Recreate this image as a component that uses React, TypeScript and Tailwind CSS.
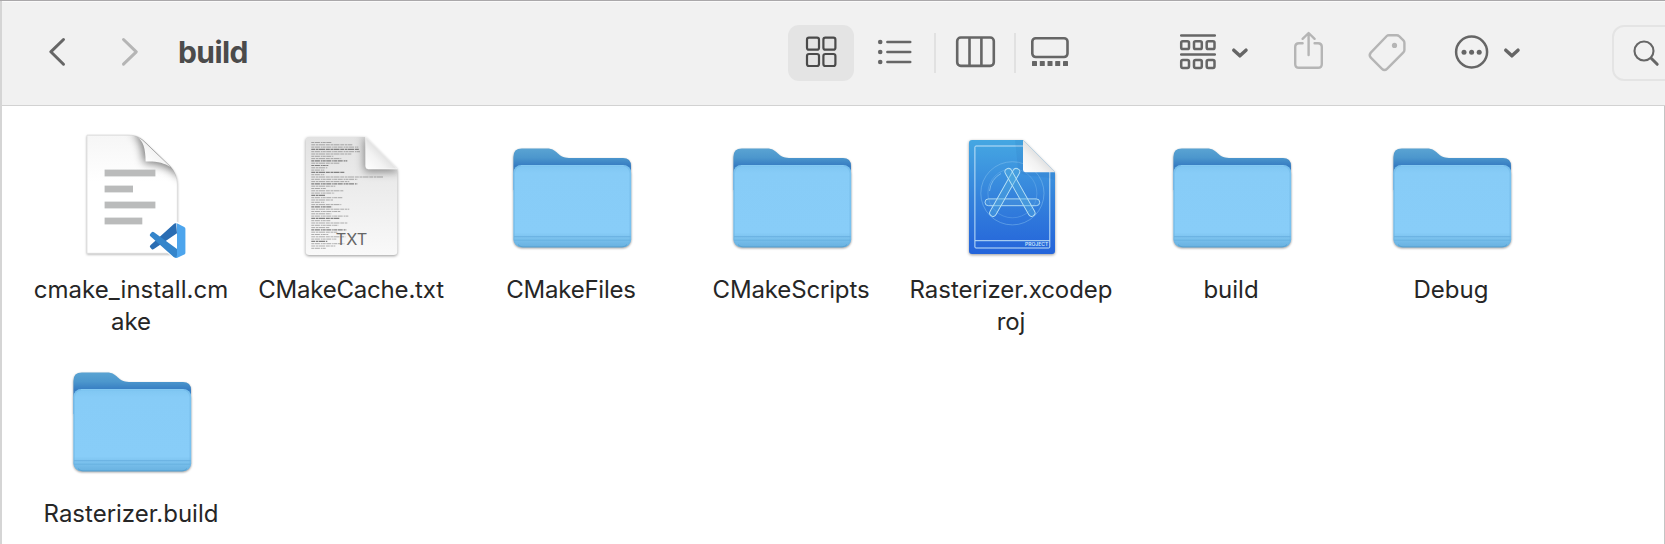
import React from "react";

const dark = "#666666";
const faint = "#b5b5b5";

function Icon({ x, w, className = "", children }: { x: number; w: number; className?: string; children: React.ReactNode }) {
  return (
    <svg width={w} height={56} viewBox={`${x} 25 ${w} 56`} fill="none" strokeLinecap="round" strokeLinejoin="round" className={`block shrink-0 ${className}`}>
      {children}
    </svg>
  );
}

function Toolbar() {
  return (
    <header className="flex h-[104px] shrink-0 items-start overflow-hidden border-b border-[#d2d2d2] bg-[#f1f1f1] pt-[23px] pl-[44px]">
      <Icon x={46} w={24}>
        <path d="M63.5 39.5 50.8 51.8 63.5 64.2" stroke={dark} strokeWidth="3" />
      </Icon>
      <Icon x={118} w={24} className="ml-12">
        <path d="M123.5 39.5 136.3 51.8 123.5 64.2" stroke={faint} strokeWidth="3" />
      </Icon>
      <h1 className="ml-9 w-[610px] shrink-0 text-[30px] leading-[54px] font-bold tracking-[-0.6px] text-[#4b4b4b]">build</h1>
      <div className="flex h-14 w-[66px] shrink-0 items-center justify-center rounded-[11px] bg-[#e4e4e4]">
        <Icon x={802} w={38}>
          <g stroke="#4a4a4a" strokeWidth="2.2">
            <rect x="807" y="37.7" width="12" height="12" rx="2" />
            <rect x="823.4" y="37.7" width="12" height="12" rx="2" />
            <rect x="807" y="54" width="12" height="12" rx="2" />
            <rect x="823.4" y="54" width="12" height="12" rx="2" />
          </g>
        </Icon>
      </div>
      <Icon x={874} w={42} className="ml-5">
        {[42, 52, 62].map((y) => (
          <g key={y}>
            <circle cx="880.2" cy={y} r="2.3" fill={dark} />
            <path d={`M887.4 ${y}H910.2`} stroke={dark} strokeWidth="2.6" />
          </g>
        ))}
      </Icon>
      <div className="mt-2 ml-[18px] h-10 w-[2px] shrink-0 bg-[#e1e1e1]" />
      <Icon x={952} w={48} className="ml-4">
        <g stroke={dark} strokeWidth="2.6">
          <rect x="957.2" y="37.5" width="36.6" height="28.4" rx="3.6" />
          <path d="M969.5 38V66M981.4 38V66" strokeLinecap="butt" />
        </g>
      </Icon>
      <div className="mt-2 ml-[14px] h-10 w-[2px] shrink-0 bg-[#e1e1e1]" />
      <Icon x={1028} w={46} className="ml-3">
        <rect x="1032.3" y="38.2" width="35.2" height="18.8" rx="3.4" stroke={dark} strokeWidth="2.6" />
        {[1032, 1039.8, 1047.5, 1055.2, 1063].map((x) => (
          <rect key={x} x={x} y="61" width="5" height="5" rx=".6" fill={dark} />
        ))}
      </Icon>
      <Icon x={1176} w={76} className="ml-[102px]">
        <g stroke={dark} strokeWidth="2.5">
          <path d="M1181.2 35.5H1214.8M1181.2 54.4H1214.8" />
          {[1181.2, 1194, 1206.7].map((x) => (
            <g key={x}>
              <rect x={x} y="41.2" width="7.8" height="7.8" rx="1.6" />
              <rect x={x} y="60.1" width="7.8" height="7.8" rx="1.6" />
            </g>
          ))}
          <path d="M1233.8 50.2 1239.9 55.8 1246 50.2" strokeWidth="3.5" />
        </g>
      </Icon>
      <Icon x={1290} w={38} className="ml-[38px]">
        <g stroke={faint} strokeWidth="2.4">
          <path d="M1302.6 43.2H1299Q1295.2 43.2 1295.2 47V64Q1295.2 67.8 1299 67.8H1318Q1321.8 67.8 1321.8 64V47Q1321.8 43.2 1318 43.2H1314.6" />
          <path d="M1308.6 55V33.4M1302.6 38.8 1308.6 33 1314.6 38.8" />
        </g>
      </Icon>
      <Icon x={1364} w={46} className="ml-9">
        <path d="M1386.8 36Q1387.6 35.2 1388.8 35.2H1396.8Q1398.2 35.2 1399.1 36.2L1403.4 40.4Q1404.4 41.4 1404.4 42.8V50Q1404.4 51.4 1403.4 52.4L1387 68.8Q1384.5 71.2 1382 68.8L1370.8 57.7Q1368.6 55.2 1370.8 52.6Z" stroke={faint} strokeWidth="2.4" />
        <circle cx="1394.5" cy="45.4" r="2.6" fill={faint} />
      </Icon>
      <Icon x={1450} w={74} className="ml-10">
        <circle cx="1471.6" cy="52" r="15.5" stroke={dark} strokeWidth="2.5" />
        {[1464, 1471.6, 1479.2].map((x) => (
          <circle key={x} cx={x} cy="52.2" r="2.5" fill={dark} />
        ))}
        <path d="M1505.8 50.2 1511.9 55.8 1518 50.2" stroke={dark} strokeWidth="3.5" />
      </Icon>
      <div className="ml-[88px] h-14 w-20 shrink-0 rounded-[12px] border-2 border-[#e4e4e4]">
        <svg width="51" height="52" viewBox="1614 27 51 52" fill="none" stroke={dark} strokeLinecap="round" className="block">
          <circle cx="1644" cy="51" r="9.5" strokeWidth="2.1" />
          <path d="M1651.2 58.3 1657.2 64.3" strokeWidth="3" />
        </svg>
      </div>
    </header>
  );
}

function Art({ children }: { children: React.ReactNode }) {
  return (
    <svg width="220" height="144" viewBox="0 0 220 144" className="block">
      {children}
    </svg>
  );
}

function FolderIcon() {
  return (
    <Art>
      <g className="drop-shadow-[0_1px_1px_rgba(0,0,0,0.4)]">
        <path d="M52.4 27Q52.4 18.6 60.8 18.6H86C97 18.6 96 28 108 28H162Q170 28 170 36V60H52.4Z" fill="url(#folderBack)" />
        <rect x="52.4" y="35" width="117.8" height="82.2" rx="8" fill="url(#folderFront)" />
      </g>
      <rect x="53.2" y="35.6" width="116" height="81" rx="7.4" fill="none" stroke="#6bb5e6" strokeOpacity=".5" strokeWidth="1.4" />
      <path d="M60 35.5H162.6" stroke="#84c9f2" strokeWidth="1" />
      <path d="M53 106.7H169.6M53 110.2H169.6" stroke="#69b1e0" strokeWidth="1" />
      <path d="M57 114.6Q58.5 116.8 62 116.8H161Q164.5 116.8 166 114.6" fill="none" stroke="#559dcc" strokeWidth=".8" />
    </Art>
  );
}

const sourcePage = "M66 5.2H108C116 5.2 120 8 124 12L149.5 36.5Q156.3 44 156.3 54V123.3H66Z";
const textPage = "M68 7H124.5L156.3 39V121.5Q156.3 125 152.8 125H68.2Q64.7 125 64.7 121.5V10.5Q64.7 7 68 7Z";

function SourceIcon() {
  return (
    <Art>
      <path d={sourcePage} className="drop-shadow-[0_1px_1px_rgba(0,0,0,0.28)]" fill="url(#paperFade)" stroke="#dcdcdc" strokeWidth=".8" />
      <g clipPath="url(#sourceClip)">
        <path d="M110 1C120 8 121 20 123 33 138 33 150 38 162 50L164 36 128 4Z" fill="#000" fillOpacity=".5" filter="url(#softShade)" />
      </g>
      <path d="M116.5 7.2C122 11 124.6 18 124.6 31.6 136 31.2 143 33 149.500 37L125 13.500Q121 9.300 116.500 7.200Z" fill="url(#curl)" />
      <g fill="#babbbb">
        <rect x="83.6" y="39.6" width="50.8" height="6.8" />
        <rect x="83.6" y="55.6" width="28.4" height="6.8" />
        <rect x="83.6" y="71.6" width="50.8" height="6.8" />
        <rect x="83.6" y="87.6" width="37.7" height="6.8" />
      </g>
      <path d="M155.2 93.4 164.3 97.6V123.8L155.2 128 138.5 113.8 132.2 119.3 129 117V113.8L132.5 110.7 129 107.5V104.3L132.2 102 138.5 107.2Z" fill="#fff" stroke="#fff" strokeWidth="3.5" strokeLinejoin="round" />
      <path d="M155.2 93.4 156 103.2 132.9 119.1Q131.7 120 130.6 119L129.3 117.6Q128.2 116.3 129.4 115.2L152.6 94.3Q153.8 93.2 155.2 93.4Z" fill="#2a6db3" />
      <path d="M129.4 103.7 130.7 102.3Q131.8 101.4 133 102.3L156 119V128Q153.8 128 152.6 127L129.4 106.3Q128.2 105 129.4 103.7Z" fill="#3485cb" />
      <path d="M155.2 93.4Q155.8 93.3 156.4 93.6L163.2 96.9Q164.4 97.5 164.4 98.8V122.7Q164.4 124 163.2 124.6L156.4 127.8Q155.2 128.3 154 127.9 156 127 156 125V96.5Q156 94 155.2 93.4Z" fill="#4da5ed" />
    </Art>
  );
}

const codeRows = Array.from({ length: 47 }, (_, i) => {
  const widths = [20, 41, 47, 48, 49, 40, 22, 30, 36, 28, 17, 16, 13, 33, 13, 72, 46, 38, 46];
  const width = i < widths.length ? widths[i] : 13 + ((i * 17) % 26);
  return { y: 12.5 + i * 2.3, width, bold: i === 10 || i % 5 === 3 };
});

function TextFileIcon() {
  return (
    <Art>
      <path className="drop-shadow-[0_1.5px_1.5px_rgba(0,0,0,0.4)]" d={textPage} fill="url(#txtPaper)" />
      <g stroke="#555">
        {codeRows.map((row, i) => (
          <path key={i} d={`M70.3 ${row.y}h${row.width}`} strokeWidth={row.bold ? 1.1 : 0.9} strokeOpacity={row.bold ? 0.7 : 0.5} strokeDasharray={i % 2 ? "4 .7 2.5 .5 6 .8" : "3 .6 5 .9 1.5 .4"} />
        ))}
      </g>
      <g clipPath="url(#textClip)">
        <path d="M123 5 160 42H126Q123 42 123 39Z" fill="#000" fillOpacity=".42" filter="url(#softShade)" />
      </g>
      <path d="M124.7 7 156.3 39H127.5Q124.7 39 124.7 36Z" fill="url(#fold)" stroke="#fff" strokeWidth=".6" />
      <text x="94.8" y="115" fontSize="16.5" textLength="31.5" lengthAdjust="spacingAndGlyphs" fontFamily="Inter, sans-serif" fill="#666">TXT</text>
    </Art>
  );
}

function ProjectIcon() {
  return (
    <Art>
      <path className="drop-shadow-[0_1.5px_1.5px_rgba(0,0,0,0.4)]" d="M71 10H122L154 42.3V121Q154 124 151 124H71Q68 124 68 121V13Q68 10 71 10Z" fill="url(#blueprint)" />
      <path d="M122 16H75Q73.9 16 73.9 17.2V117Q73.9 118 75 118H147.8Q148.8 118 148.8 117V42M74 110.7H148.8" fill="none" stroke="#c2e2f8" strokeWidth="1" />
      <g fill="none" stroke="#8cc6f0" strokeOpacity=".5">
        <circle cx="111.4" cy="63.3" r="31.6" strokeWidth=".9" />
        <circle cx="111.4" cy="63.3" r="24.5" strokeWidth=".6" />
      </g>
      <path d="M88.5 61Q90 49 100 43.5" fill="none" stroke="#9fd2f4" strokeOpacity=".6" strokeWidth="1" />
      <g fill="none" stroke="#b9e2f6" strokeWidth=".9">
        <rect x="84" y="68.9" width="54.7" height="6.8" rx="3.4" fill="#59a6df" fillOpacity=".3" />
        <rect x="-3.4" y="-27" width="6.8" height="54" rx="3.4" transform="translate(103.7 62.3) rotate(29.5)" fill="#59b5df" fillOpacity=".35" />
        <rect x="-3.4" y="-27" width="6.8" height="54" rx="3.4" transform="translate(119 62.3) rotate(-29.5)" fill="#59b5df" fillOpacity=".35" />
      </g>
      <path d="M114 10H122V42.3H154V50C140 44 118 49 117 38Z" fill="#174d96" fillOpacity=".08" />
      <path d="M122 10 154 42.3H125Q122 42.3 122 39.3Z" fill="url(#fold)" />
      <text x="124" y="116" fontSize="5" fontWeight="600" textLength="23.3" lengthAdjust="spacingAndGlyphs" fontFamily="Inter, sans-serif" fill="#cce6fa">PROJECT</text>
    </Art>
  );
}

function Gradients() {
  return (
    <svg width="0" height="0" className="absolute">
      <defs>
        <linearGradient id="folderBack" gradientUnits="userSpaceOnUse" x1="0" y1="18" x2="0" y2="42">
          <stop offset="0" stopColor="#5ba4d3" />
          <stop offset=".4" stopColor="#4c97cd" />
          <stop offset=".75" stopColor="#367cc2" />
          <stop offset="1" stopColor="#3b86c6" />
        </linearGradient>
        <linearGradient id="folderFront" x1="0" y1="0" x2="0" y2="1">
          <stop offset="0" stopColor="#7fc6f2" />
          <stop offset=".1" stopColor="#87ccf7" />
          <stop offset=".82" stopColor="#88cdf8" />
          <stop offset=".88" stopColor="#7dc3ef" />
          <stop offset="1" stopColor="#68b1e0" />
        </linearGradient>
        <linearGradient id="paperFade" x1="0" y1="0" x2="0" y2="1">
          <stop offset="0" stopColor="#f6f6f6" />
          <stop offset=".4" stopColor="#ffffff" />
        </linearGradient>
        <linearGradient id="curl" x1="1" y1="0" x2="0" y2="1">
          <stop offset=".4" stopColor="#f0f0f0" />
          <stop offset=".8" stopColor="#fff" />
        </linearGradient>
        <linearGradient id="txtPaper" x1="0" y1="0" x2="0" y2="1">
          <stop offset="0" stopColor="#e2e2e2" />
          <stop offset="1" stopColor="#f9f9f9" />
        </linearGradient>
        <linearGradient id="fold" x1="0" y1="1" x2=".55" y2=".45">
          <stop offset="0" stopColor="#fff" />
          <stop offset=".6" stopColor="#f2f2f2" />
          <stop offset="1" stopColor="#dedede" />
        </linearGradient>
        <linearGradient id="blueprint" x1="0" y1="0" x2="0" y2="1">
          <stop offset="0" stopColor="#45a7e2" />
          <stop offset=".5" stopColor="#3583dc" />
          <stop offset="1" stopColor="#2464da" />
        </linearGradient>
        <filter id="softShade" x="-50%" y="-50%" width="200%" height="200%">
          <feGaussianBlur stdDeviation="4" />
        </filter>
        <clipPath id="sourceClip">
          <path d={sourcePage} />
        </clipPath>
        <clipPath id="textClip">
          <path d={textPage} />
        </clipPath>
      </defs>
    </svg>
  );
}

const items = [
  { lines: ["cmake_install.cm", "ake"], icon: <SourceIcon />, tracking: "tracking-[0.03px]" },
  { lines: ["CMakeCache.txt"], icon: <TextFileIcon />, tracking: "tracking-[-0.2px]" },
  { lines: ["CMakeFiles"], icon: <FolderIcon />, tracking: "tracking-[-0.22px]" },
  { lines: ["CMakeScripts"], icon: <FolderIcon />, tracking: "tracking-[-0.15px]" },
  { lines: ["Rasterizer.xcodep", "roj"], icon: <ProjectIcon />, tracking: "tracking-[-0.05px]" },
  { lines: ["build"], icon: <FolderIcon />, tracking: "tracking-[0px]" },
  { lines: ["Debug"], icon: <FolderIcon />, tracking: "tracking-[0px]" },
  { lines: ["Rasterizer.build"], icon: <FolderIcon />, tracking: "tracking-[0px]" },
];

export default function App() {
  return (
    <div className="flex h-[544px] w-[1665px] flex-col overflow-hidden border-t border-t-[#aaa8aa] bg-white font-['Inter',sans-serif]">
      <Gradients />
      <div className="flex min-h-0 flex-1 flex-col border-l-2 border-[#d5d5d5]">
        <div className="h-px shrink-0 bg-[#fafafa]" />
        <Toolbar />
        <main className="min-h-0 flex-1 overflow-hidden border-r border-[#c4c4c4] pt-6 pl-[19px]">
          <div className="grid auto-rows-[224px] grid-cols-[repeat(7,220px)]">
            {items.map((item) => (
              <div key={item.lines.join("")} className="flex flex-col items-center">
                {item.icon}
                <div className={`text-center text-[24px] leading-8 whitespace-nowrap text-[#262626] ${item.tracking}`}>
                  {item.lines.map((line) => (
                    <div key={line}>{line}</div>
                  ))}
                </div>
              </div>
            ))}
          </div>
        </main>
      </div>
    </div>
  );
}
